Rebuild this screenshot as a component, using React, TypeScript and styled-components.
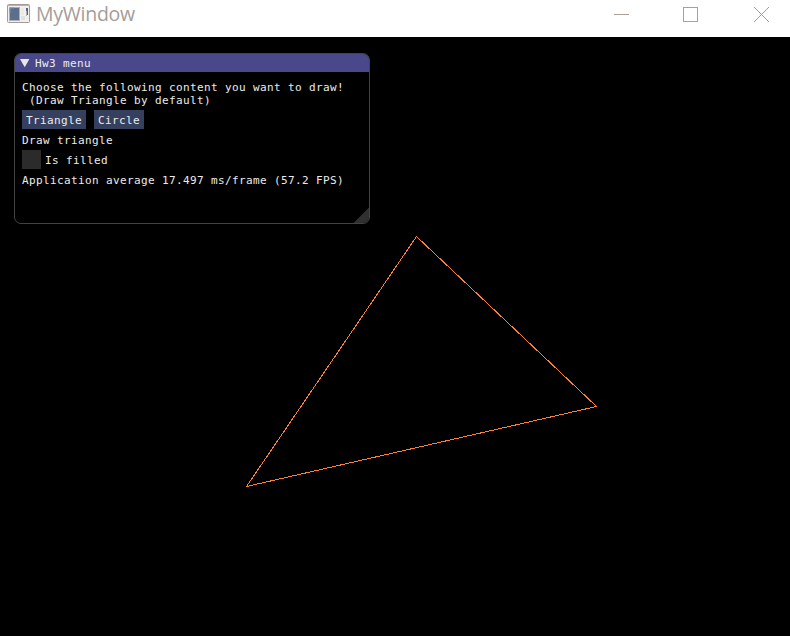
import React from "react";
import styled, { createGlobalStyle } from "styled-components";

const GlobalStyle = createGlobalStyle`
  * { box-sizing: border-box; }
  body { margin: 0; background: #000; overflow: hidden; }
`;

const AppWindow = styled.div`
  width: 790px;
  height: 636px;
  display: flex;
  flex-direction: column;
  background: #000;
`;

const Caption = styled.header`
  height: 37px;
  flex: none;
  display: flex;
  align-items: flex-start;
  justify-content: space-between;
  background: #fff;
`;

const CaptionTitle = styled.div`
  display: flex;
  gap: 6px;
  padding: 3px 0 0 7px;
  svg { display: block; }
`;

const CaptionText = styled.span`
  font: 19.5px/24px "Open Sans", sans-serif;
  letter-spacing: -0.25px;
  margin-top: -1px;
  color: #a39d99;
`;

const CaptionControls = styled.div`
  display: flex;
  gap: 54px;
  padding: 6px 20px 0 0;
  svg { display: block; }
`;

const Canvas = styled.main`
  position: relative;
  flex: 1;
  padding: 16px 14px;
`;

const Scene = styled.svg`
  position: absolute;
  inset: 0;
`;

const Panel = styled.section`
  position: relative;
  width: 356px;
  height: 171px;
  border: 1px solid #434343;
  border-radius: 7px;
  overflow: hidden;
  font: 11px/13px "DejaVu Sans Mono", monospace;
  letter-spacing: calc(7px - 0.602em);
  color: #ececec;
  white-space: pre;
`;

const PanelHeader = styled.div`
  height: 19px;
  margin: -1px -1px 0;
  display: flex;
  align-items: center;
  gap: 5px;
  padding-left: 5px;
  background: #48488a;
  border: 1px solid #63638c;
  border-bottom: 0;
  border-radius: 7px 7px 0 0;
`;

const PanelBody = styled.div`
  display: flex;
  flex-direction: column;
  gap: 4px;
  padding: 8px 7px;
`;

const Label = styled.div`
  padding-top: 1px;
  margin-bottom: -1px;
`;

const Row = styled.div<{ $gap: number }>`
  display: flex;
  align-items: center;
  gap: ${(p) => p.$gap}px;
`;

const Button = styled.button`
  height: 19px;
  padding: 2px 4px 0;
  border: 0;
  background: #35405f;
  color: inherit;
  font: inherit;
  letter-spacing: inherit;
`;

const Checkbox = styled.span`
  width: 19px;
  height: 19px;
  background: #2b2b2b;
`;

const ResizeGrip = styled.svg`
  position: absolute;
  right: -1px;
  bottom: -1px;
`;

export default function App() {
  return (
    <AppWindow>
      <GlobalStyle />
      <Caption>
        <CaptionTitle>
          <svg width="23" height="20" viewBox="0 0 23 20">
            <rect x="0.5" y="1.5" width="22" height="18" rx="1" fill="#f2f0ee" stroke="#a39a96" />
            <path d="M1 2.5H22" stroke="#a9b6c4" />
            <rect x="2.5" y="4.5" width="10" height="13" fill="#5b6f8c" stroke="#a9b0bb" />
            <path d="M3 10V5H7" fill="none" stroke="#7890a9" />
            <rect x="14" y="5" width="3" height="7" fill="#f0eadd" />
            <rect x="19" y="5" width="2" height="7" fill="#536583" />
            <rect x="19" y="8" width="1" height="5" fill="#b8aca5" />
            <rect x="14" y="13" width="4" height="4" fill="#dfe1e4" />
          </svg>
          <CaptionText>MyWindow</CaptionText>
        </CaptionTitle>
        <CaptionControls>
          <svg width="15" height="17" viewBox="0 0 15 17">
            <path d="M0 8.5H15" stroke="#aaa09a" />
          </svg>
          <svg width="15" height="17" viewBox="0 0 15 17">
            <rect x="0.5" y="1.5" width="14" height="14" fill="none" stroke="#aaa09a" />
          </svg>
          <svg width="18" height="17" viewBox="-1 0 18 17">
            <path d="M1 1L16 16M16 1L1 16" stroke="#a59c97" />
          </svg>
        </CaptionControls>
      </Caption>
      <Canvas>
        <Scene width="790" height="599" viewBox="0 0 790 599">
          <path
            d="M416.5 199.5L596.5 369.5L246.5 449.5Z"
            fill="none"
            stroke="#ff8033"
            shapeRendering="crispEdges"
          />
        </Scene>
        <Panel>
          <PanelHeader>
            <svg width="10" height="9" viewBox="0 0 10 9">
              <path d="M0 0H9.4L4.7 8.2Z" fill="#e8e8e8" />
            </svg>
            <span>Hw3 menu</span>
          </PanelHeader>
          <PanelBody>
            <Label>{"Choose the following content you want to draw!\n (Draw Triangle by default)"}</Label>
            <Row $gap={8}>
              <Button>Triangle</Button>
              <Button>Circle</Button>
            </Row>
            <Label>Draw triangle</Label>
            <Row $gap={4}>
              <Checkbox />
              <Label>Is filled</Label>
            </Row>
            <Label>Application average 17.497 ms/frame (57.2 FPS)</Label>
          </PanelBody>
          <ResizeGrip width="17" height="17" viewBox="0 0 17 17">
            <path d="M0 16.5L16.5 0V9.5A7 7 0 0 1 9.5 16.5Z" fill="#303030" />
            <path d="M16.5 0V10A6.5 6.5 0 0 1 10 16.5H0" fill="none" stroke="#434343" />
          </ResizeGrip>
        </Panel>
      </Canvas>
    </AppWindow>
  );
}
